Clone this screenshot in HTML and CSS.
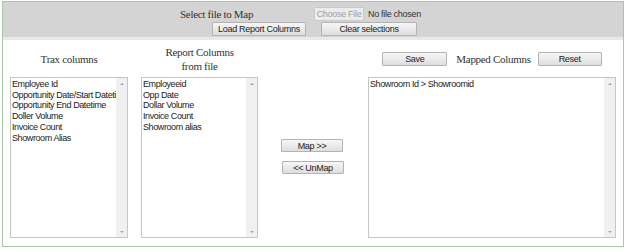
FILE: index.html
```html
<!DOCTYPE html>
<html lang="en">
<head>
    <meta charset="UTF-8">
    <title>Column Mapping</title>
    <link rel="stylesheet" href="styles.css">
</head>
<body>
    <div class="frame">
        <div class="toolbar">
            <div class="toolbar-row first">
                <span class="label">Select file to Map</span>
                <button class="btn file-btn" disabled>Choose File</button>
                <span class="file-name">No file chosen</span>
            </div>
            <div class="toolbar-row second">
                <button class="btn load-btn">Load Report Columns</button>
                <button class="btn clear-btn">Clear selections</button>
            </div>
        </div>
        <div class="mapper">
            <div class="col trax">
                <div class="col-head"><span class="title">Trax columns</span></div>
                <div class="listbox">
                    <div class="items">
                        <div>Employee Id</div>
                        <div>Opportunity Date/Start Datetime</div>
                        <div>Opportunity End Datetime</div>
                        <div>Doller Volume</div>
                        <div>Invoice Count</div>
                        <div>Showroom Alias</div>
                    </div>
                    <div class="scroll"><span class="up"></span><span class="down"></span></div>
                </div>
            </div>
            <div class="col report">
                <div class="col-head"><span class="title">Report Columns<br>from file</span></div>
                <div class="listbox">
                    <div class="items">
                        <div>Employeeid</div>
                        <div>Opp Date</div>
                        <div>Dollar Volume</div>
                        <div>Invoice Count</div>
                        <div>Showroom alias</div>
                    </div>
                    <div class="scroll"><span class="up"></span><span class="down"></span></div>
                </div>
            </div>
            <div class="col actions">
                <button class="btn map-btn">Map &gt;&gt;</button>
                <button class="btn unmap-btn">&lt;&lt; UnMap</button>
            </div>
            <div class="col mapped">
                <div class="col-head">
                    <button class="btn save-btn">Save</button>
                    <span class="title">Mapped Columns</span>
                    <button class="btn reset-btn">Reset</button>
                </div>
                <div class="listbox">
                    <div class="items">
                        <div>Showroom Id &gt; Showroomid</div>
                    </div>
                    <div class="scroll"><span class="up"></span><span class="down"></span></div>
                </div>
            </div>
        </div>
    </div>
</body>
</html>
```

FILE: styles.css
```css
body {
    margin: 1px 3px 0 2px;
    background-color: #fff;
    font-family: "Liberation Sans", Arial, sans-serif;
}
.frame {
    border: 1px solid #a9c7a2;
    height: 244px;
    box-sizing: content-box;
}
.toolbar {
    background-color: #d4d4d4;
    height: 35px;
    border-bottom: 3px solid #e9e9e9;
}
.toolbar-row {
    display: flex;
    align-items: center;
}
.toolbar-row.first {
    padding-top: 5px;
    padding-left: 177px;
    height: 14px;
}
.toolbar-row.second {
    padding-top: 1px;
    padding-left: 209px;
}
.label {
    width: 134px;
    font-family: "Liberation Serif", "Times New Roman", serif;
    font-size: 11px;
    letter-spacing: -0.3px;
    color: #333;
}
.file-name {
    margin-left: 4px;
    font-size: 9px;
    letter-spacing: -0.3px;
    color: #333;
}
.btn {
    font-family: "Liberation Sans", Arial, sans-serif;
    font-size: 9px;
    letter-spacing: -0.3px;
    color: #222;
    height: 14px;
    padding: 0;
    border: 1px solid #b3b3b3;
    border-radius: 1px;
    background: linear-gradient(#f7f7f7, #dedede);
    line-height: 12px;
}
.file-btn {
    width: 50px;
    color: #a0a0a0;
    background: #ececec;
    border-color: #c9c9c9;
}
.load-btn {
    width: 94px;
}
.clear-btn {
    width: 96px;
    margin-left: 15px;
}
.mapper {
    display: flex;
    padding: 0 7px;
}
.col {
    display: flex;
    flex-direction: column;
}
.trax {
    width: 118px;
}
.report {
    width: 117px;
    margin-left: 13px;
}
.actions {
    width: 110px;
    align-items: center;
    padding-top: 99px;
    gap: 9px;
}
.mapped {
    width: 248px;
}
.col-head {
    height: 37px;
    display: flex;
    align-items: center;
    justify-content: center;
}
.title {
    font-family: "Liberation Serif", "Times New Roman", serif;
    font-size: 11px;
    line-height: 14px;
    letter-spacing: -0.3px;
    color: #333;
    text-align: center;
}
.listbox {
    height: 159px;
    border: 1px solid #c6c6c6;
    display: flex;
    background-color: #fff;
}
.items {
    flex: 1;
    overflow: hidden;
    white-space: nowrap;
    padding: 1px 0 0 1px;
    font-size: 9px;
    line-height: 10.7px;
    letter-spacing: -0.4px;
    color: #222;
}
.scroll {
    width: 11px;
    background-color: #f0f0f0;
    display: flex;
    flex-direction: column;
    justify-content: space-between;
    align-items: center;
    padding: 5px 0 4px;
}
.scroll span {
    width: 0;
    height: 0;
    border-left: 2px solid transparent;
    border-right: 2px solid transparent;
}
.scroll .up {
    border-bottom: 2px solid #a3a3a3;
}
.scroll .down {
    border-top: 2px solid #a3a3a3;
}
.map-btn {
    width: 62px;
    height: 13px;
    margin-left: -2px;
}
.unmap-btn {
    width: 62px;
    height: 13px;
}
.save-btn {
    width: 65px;
}
.mapped .title {
    margin: 0 7px 0 9px;
}
.reset-btn {
    width: 64px;
}
```
